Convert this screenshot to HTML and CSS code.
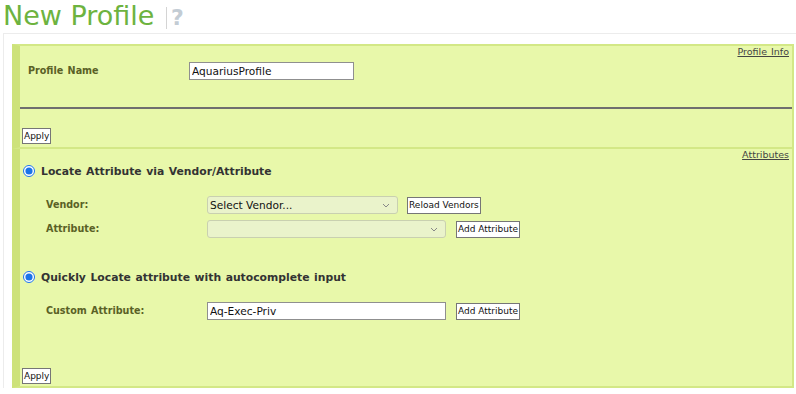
FILE: index.html
```html
<!DOCTYPE html>
<html lang="en">
<head>
    <meta charset="UTF-8">
    <title>New Profile</title>
    <link rel="stylesheet" href="styles.css">
</head>
<body>
    <h1 class="page-title">New Profile <span class="help">?</span></h1>

    <div class="content">
        <div class="panel">
            <div class="panel-link"><a href="#">Profile Info</a></div>
            <div class="field-row">
                <label class="field-label">Profile Name</label>
                <input class="text-input profile-input" type="text" value="AquariusProfile">
            </div>
            <hr class="divider">
            <button class="btn apply-btn">Apply</button>
        </div>

        <div class="panel panel-attrs">
            <div class="panel-link"><a href="#">Attributes</a></div>

            <div class="option-head first-head">
                <input type="radio" name="mode" checked>
                <span>Locate Attribute via Vendor/Attribute</span>
            </div>
            <div class="field-row vendor-row">
                <label class="field-label">Vendor:</label>
                <select class="select vendor-select">
                    <option>Select Vendor...</option>
                </select>
                <button class="btn">Reload Vendors</button>
            </div>
            <div class="field-row attr-row">
                <label class="field-label">Attribute:</label>
                <select class="select attr-select">
                    <option></option>
                </select>
                <button class="btn">Add Attribute</button>
            </div>

            <div class="option-head second-head">
                <input type="radio" name="mode2" checked>
                <span>Quickly Locate attribute with autocomplete input</span>
            </div>
            <div class="field-row custom-row">
                <label class="field-label">Custom Attribute:</label>
                <input class="text-input custom-input" type="text" value="Aq-Exec-Priv">
                <button class="btn">Add Attribute</button>
            </div>

            <button class="btn apply-btn apply-bottom">Apply</button>
        </div>
    </div>
</body>
</html>
```

FILE: styles.css
```css
* {
    box-sizing: border-box;
}

body {
    margin: 0;
    background: #ffffff;
    font-family: 'DejaVu Sans', Verdana, sans-serif;
    color: #333333;
}

.page-title {
    margin: 0;
    height: 33px;
    padding-left: 3px;
    font-size: 27px;
    font-weight: normal;
    line-height: 31px;
    color: #6db33f;
}

.help {
    display: inline-block;
    margin-left: 3px;
    padding-left: 4px;
    border-left: 1px solid #d4d4d4;
    font-size: 22px;
    font-weight: bold;
    line-height: 22px;
    color: #c3ccd4;
}

.content {
    margin-left: 3px;
    border-top: 1px solid #ececec;
    border-left: 1px solid #ececec;
    padding: 10px 2px 0 8px;
}

.panel {
    background: #e8f8aa;
    border: 2px solid #d3e886;
    border-left: 8px solid #cde27a;
}

.panel-attrs {
    border-top: 0;
}

.panel-link {
    height: 12px;
    padding-right: 3px;
    text-align: right;
    font-size: 9.5px;
    line-height: 12px;
}

.panel-link a {
    color: #444444;
    word-spacing: 1px;
}

.field-row {
    display: flex;
    align-items: center;
    margin-top: 4px;
    padding-left: 8px;
}

.field-label {
    flex: 0 0 161px;
    align-self: flex-start;
    padding-top: 3px;
    font-size: 9.6px;
    font-weight: bold;
    word-spacing: 1px;
    color: #5a6126;
}

.text-input {
    height: 18px;
    padding: 0 2px;
    border: 1px solid #8f8f8f;
    background: #ffffff;
    font-family: 'DejaVu Sans', sans-serif;
    font-size: 10.6px;
    color: #111111;
}

.profile-input {
    width: 165px;
}

.divider {
    margin: 27px 0 0;
    border: 0;
    height: 2px;
    background: #6f6f6f;
}

.btn {
    height: 17px;
    padding: 0 1px;
    border: 1px solid #767676;
    background: #ffffff;
    font-family: 'DejaVu Sans', sans-serif;
    font-size: 9px;
    color: #111111;
}

.apply-btn {
    display: block;
    margin: 19px 0 3px 2px;
    height: 16px;
}

.option-head {
    display: flex;
    align-items: center;
    height: 16px;
    font-size: 10.8px;
    font-weight: bold;
    word-spacing: 0.8px;
    color: #333333;
}

.option-head input {
    width: 12px;
    height: 12px;
    margin: 0 6px 0 3px;
    accent-color: #1a73e8;
}

.first-head {
    margin-top: 2px;
}

.second-head {
    margin-top: 31px;
}

.vendor-row,
.attr-row,
.custom-row {
    padding-left: 26px;
}

.vendor-row {
    margin-top: 17px;
}

.attr-row {
    margin-top: 6px;
}

.custom-row {
    margin-top: 17px;
}

.select {
    appearance: none;
    height: 18px;
    padding: 0 2px;
    border: 1px solid #c9d0b0;
    border-radius: 3px;
    background-color: #eaf3cb;
    background-image: url("data:image/svg+xml,%3Csvg xmlns='http://www.w3.org/2000/svg' width='8' height='5' viewBox='0 0 8 5'%3E%3Cpath d='M1 1l3 3 3-3' fill='none' stroke='%23888' stroke-width='1'/%3E%3C/svg%3E");
    background-repeat: no-repeat;
    background-position: right 7px center;
    font-family: 'DejaVu Sans', sans-serif;
    font-size: 10.6px;
    color: #111111;
}

.vendor-select {
    width: 191px;
    margin-right: 9px;
}

.attr-select {
    width: 239px;
    margin-right: 10px;
}

.custom-input {
    width: 239px;
    margin-right: 10px;
}

.apply-bottom {
    margin-top: 48px;
    margin-bottom: 2px;
}
```
